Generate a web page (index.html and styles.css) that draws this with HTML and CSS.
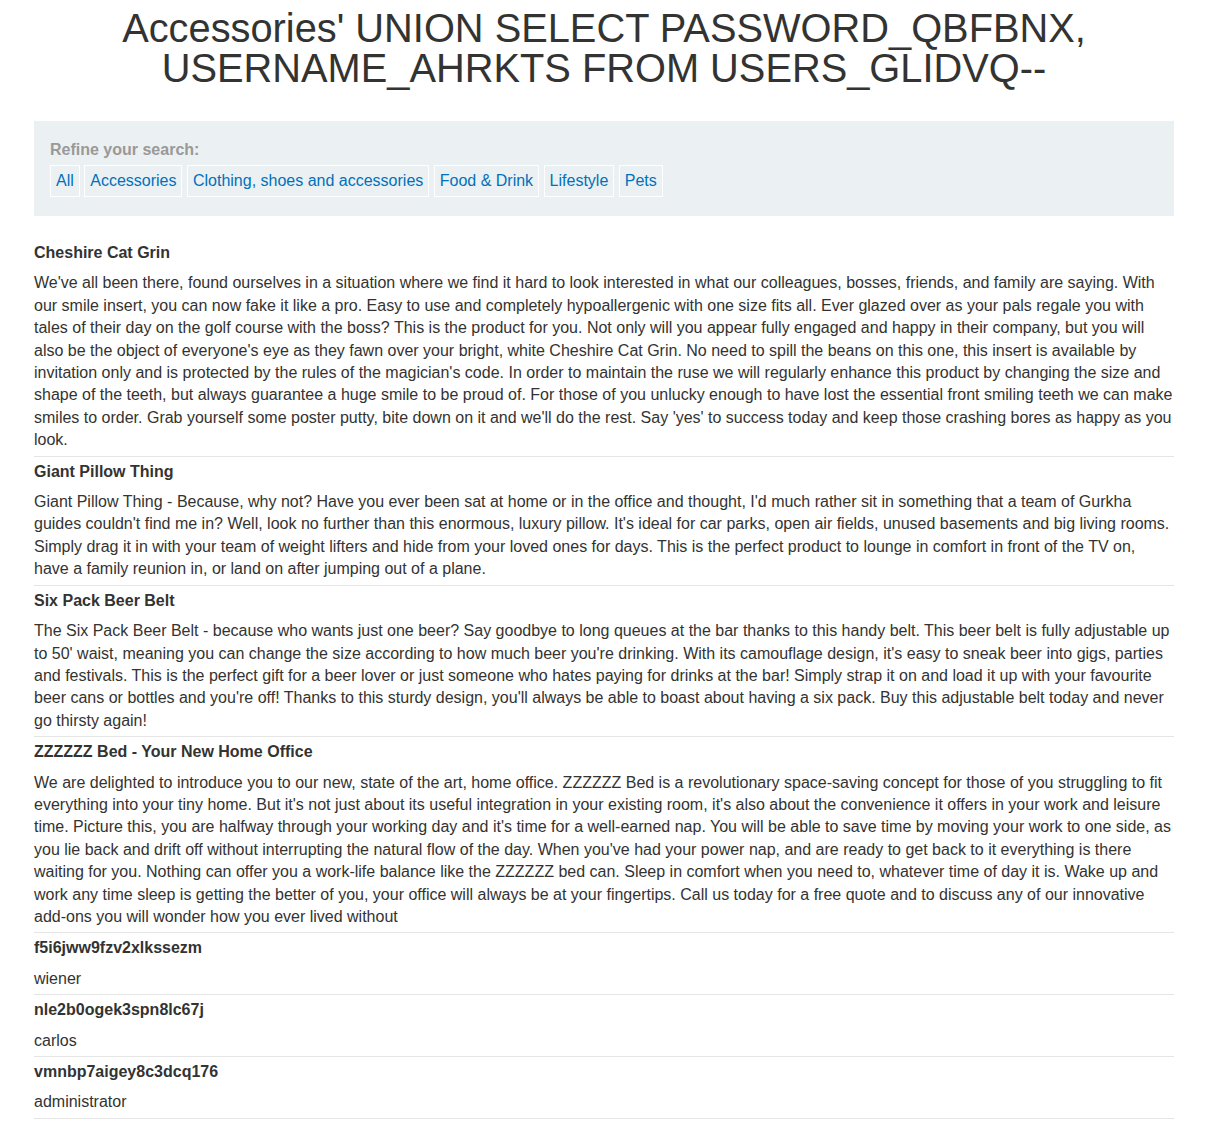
FILE: index.html
```html
<!DOCTYPE html>
<html>
<head>
<meta charset="utf-8">
<link rel="stylesheet" href="styles.css">
</head>
<body>
<div class="container">
  <h1 class="title">Accessories' UNION SELECT PASSWORD_QBFBNX, USERNAME_AHRKTS FROM USERS_GLIDVQ--</h1>
  <section class="filter">
    <div class="filter-label">Refine your search:</div>
    <div class="filter-links">
      <a class="filter-link" href="#">All</a>
      <a class="filter-link" href="#">Accessories</a>
      <a class="filter-link" href="#">Clothing, shoes and accessories</a>
      <a class="filter-link" href="#">Food &amp; Drink</a>
      <a class="filter-link" href="#">Lifestyle</a>
      <a class="filter-link" href="#">Pets</a>
    </div>
  </section>
  <table class="products">
    <tbody>
      <tr><th>Cheshire Cat Grin</th></tr>
      <tr><td>We've all been there, found ourselves in a situation where we find it hard to look interested in what our colleagues, bosses, friends, and family are saying. With our smile insert, you can now fake it like a pro. Easy to use and completely hypoallergenic with one size fits all. Ever glazed over as your pals regale you with tales of their day on the golf course with the boss? This is the product for you. Not only will you appear fully engaged and happy in their company, but you will also be the object of everyone's eye as they fawn over your bright, white Cheshire Cat Grin. No need to spill the beans on this one, this insert is available by invitation only and is protected by the rules of the magician's code. In order to maintain the ruse we will regularly enhance this product by changing the size and shape of the teeth, but always guarantee a huge smile to be proud of. For those of you unlucky enough to have lost the essential front smiling teeth we can make smiles to order. Grab yourself some poster putty, bite down on it and we'll do the rest. Say 'yes' to success today and keep those crashing bores as happy as you look.</td></tr>
      <tr><th>Giant Pillow Thing</th></tr>
      <tr><td>Giant Pillow Thing - Because, why not? Have you ever been sat at home or in the office and thought, I'd much rather sit in something that a team of Gurkha guides couldn't find me in? Well, look no further than this enormous, luxury pillow. It's ideal for car parks, open air fields, unused basements and big living rooms. Simply drag it in with your team of weight lifters and hide from your loved ones for days. This is the perfect product to lounge in comfort in front of the TV on, have a family reunion in, or land on after jumping out of a plane.</td></tr>
      <tr><th>Six Pack Beer Belt</th></tr>
      <tr><td>The Six Pack Beer Belt - because who wants just one beer? Say goodbye to long queues at the bar thanks to this handy belt. This beer belt is fully adjustable up to 50' waist, meaning you can change the size according to how much beer you're drinking. With its camouflage design, it's easy to sneak beer into gigs, parties and festivals. This is the perfect gift for a beer lover or just someone who hates paying for drinks at the bar! Simply strap it on and load it up with your favourite beer cans or bottles and you're off! Thanks to this sturdy design, you'll always be able to boast about having a six pack. Buy this adjustable belt today and never go thirsty again!</td></tr>
      <tr><th>ZZZZZZ Bed - Your New Home Office</th></tr>
      <tr><td>We are delighted to introduce you to our new, state of the art, home office. ZZZZZZ Bed is a revolutionary space-saving concept for those of you struggling to fit everything into your tiny home. But it's not just about its useful integration in your existing room, it's also about the convenience it offers in your work and leisure time. Picture this, you are halfway through your working day and it's time for a well-earned nap. You will be able to save time by moving your work to one side, as you lie back and drift off without interrupting the natural flow of the day. When you've had your power nap, and are ready to get back to it everything is there waiting for you. Nothing can offer you a work-life balance like the ZZZZZZ bed can. Sleep in comfort when you need to, whatever time of day it is. Wake up and work any time sleep is getting the better of you, your office will always be at your fingertips. Call us today for a free quote and to discuss any of our innovative add-ons you will wonder how you ever lived without</td></tr>
      <tr><th>f5i6jww9fzv2xlkssezm</th></tr>
      <tr><td>wiener</td></tr>
      <tr><th>nle2b0ogek3spn8lc67j</th></tr>
      <tr><td>carlos</td></tr>
      <tr><th>vmnbp7aigey8c3dcq176</th></tr>
      <tr><td>administrator</td></tr>
    </tbody>
  </table>
</div>
</body>
</html>
```

FILE: styles.css
```css
html, body {
  margin: 0;
  padding: 0;
  background: #fff;
}
body {
  font-family: "Liberation Sans", Arial, sans-serif;
  font-size: 16px;
  color: #333332;
}
.container {
  width: 1140px;
  margin: 0 38px 0 34px;
  padding-top: 8px;
}
.title {
  margin: 0 0 33px 0;
  font-size: 39.8px;
  line-height: 40px;
  font-weight: normal;
  text-align: center;
  color: #333332;
}
.filter {
  background: #ebf0f2;
  padding: 18px 16px 19px 16px;
}
.filter-label {
  font-weight: bold;
  color: #999;
  line-height: 22px;
  margin-bottom: 4px;
}
.filter-links {
  line-height: 22px;
}
.filter-link {
  display: inline-block;
  padding: 4px 5px;
  border: 1px solid #fff;
  color: #0071bc;
  text-decoration: none;
}
.products {
  width: 100%;
  border-collapse: collapse;
  margin-top: 22px;
}
.products th {
  text-align: left;
  font-weight: bold;
  padding: 4px 0 4px 0;
  line-height: 22.4px;
}
.products td {
  padding: 4px 0 4px 0;
  line-height: 22.4px;
  border-bottom: 1px solid #e6e6e6;
}
```
